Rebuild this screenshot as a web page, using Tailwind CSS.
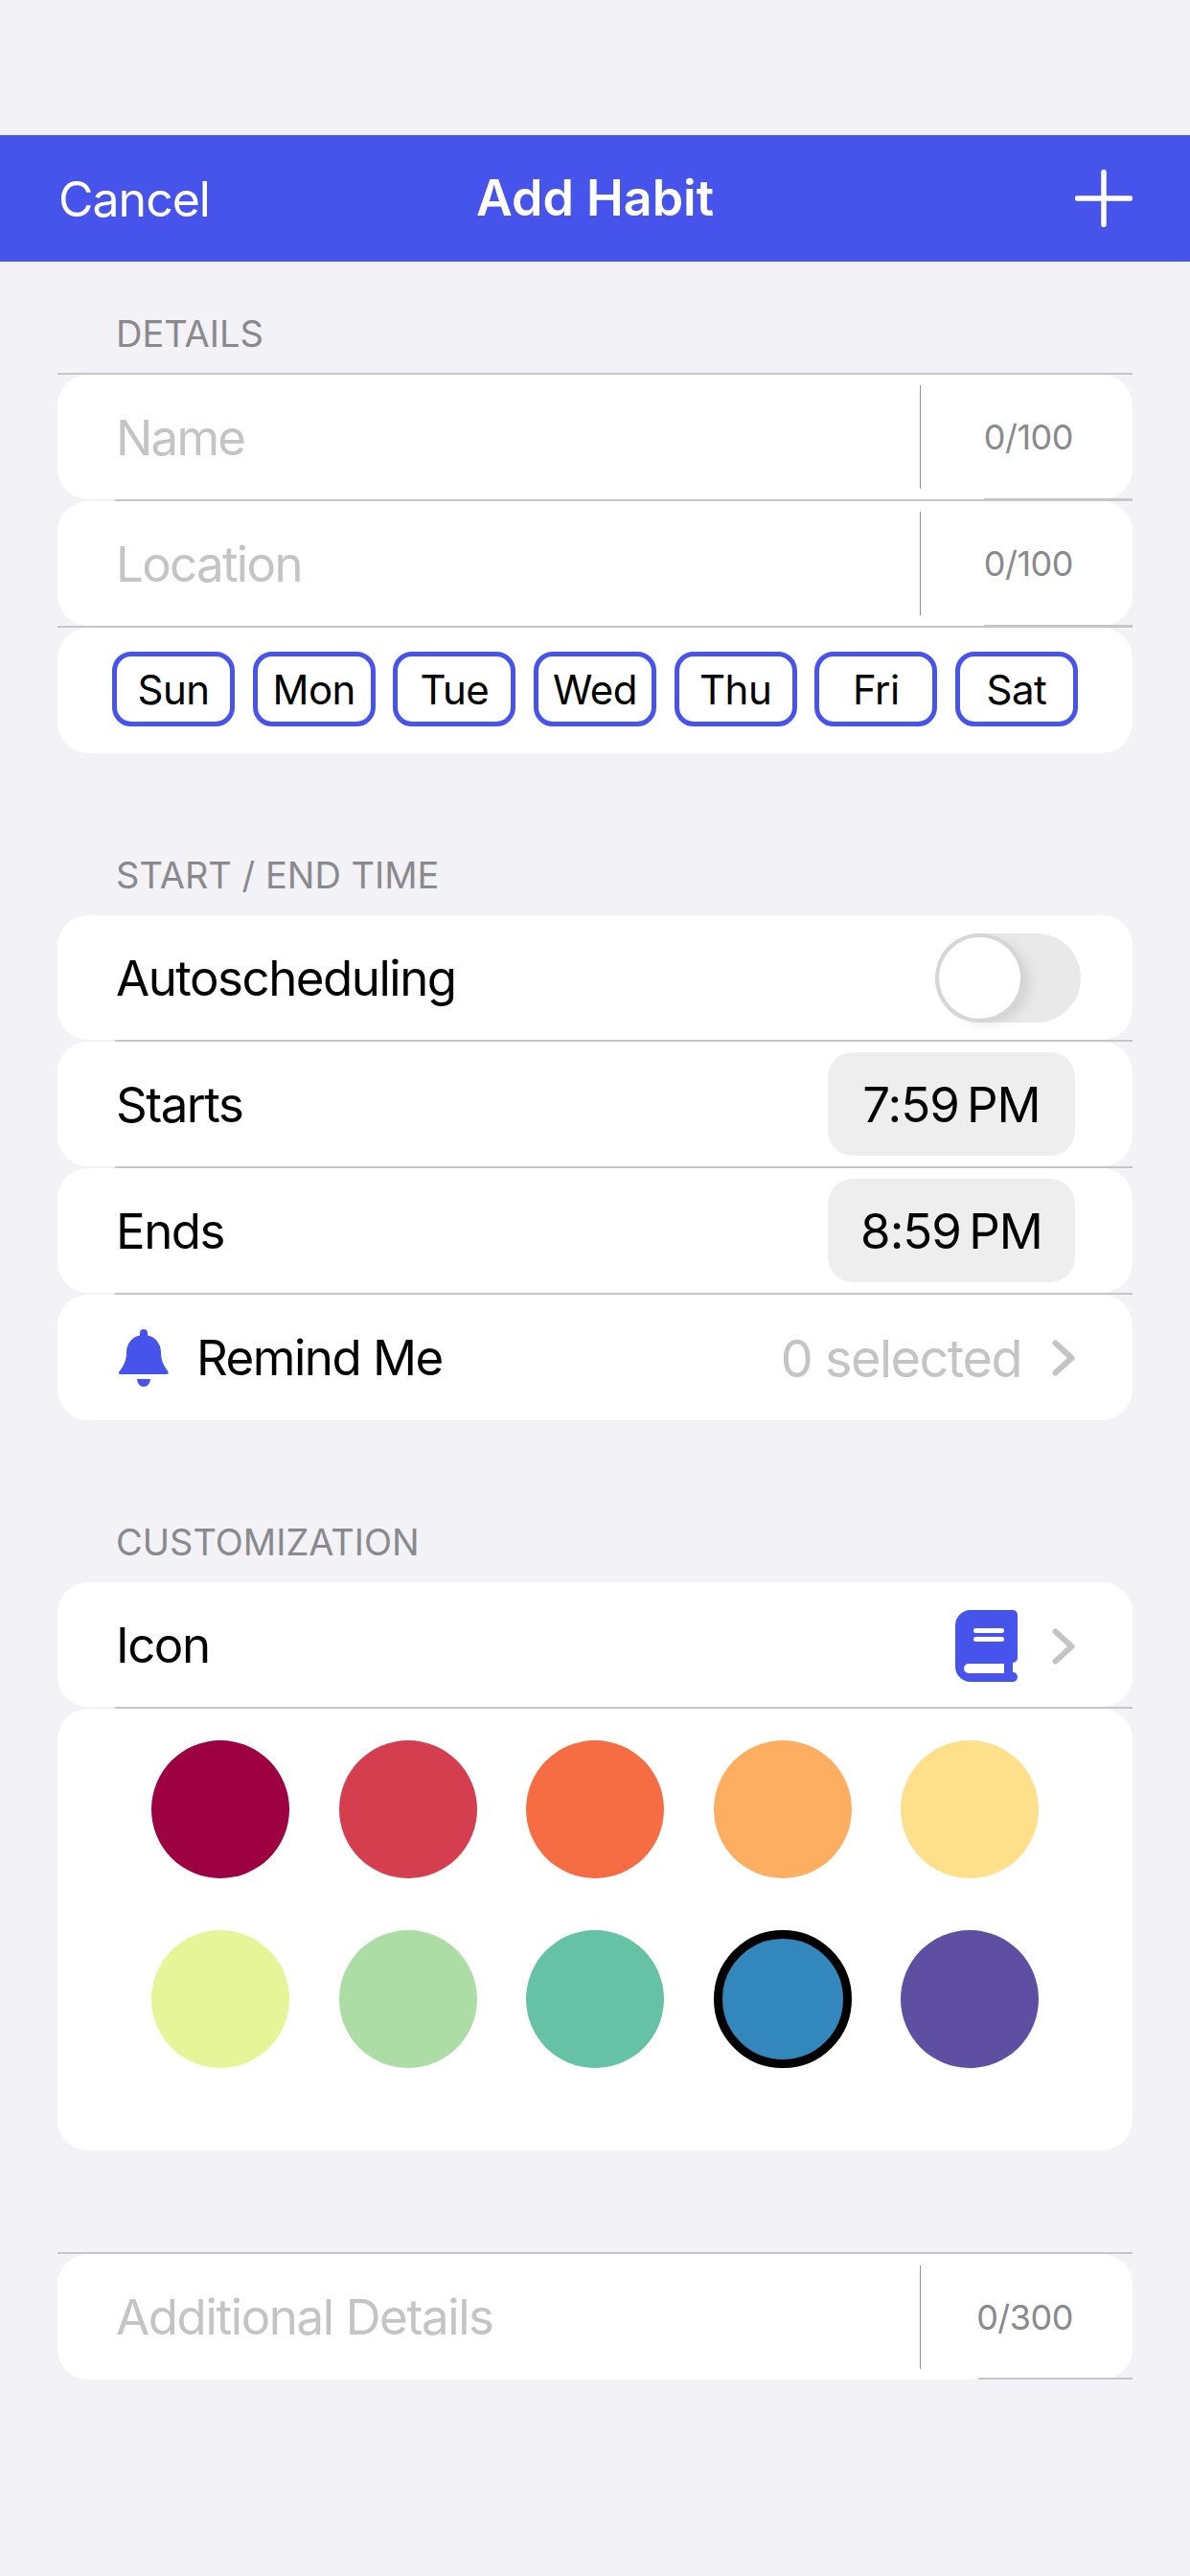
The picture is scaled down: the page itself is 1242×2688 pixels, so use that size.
<!DOCTYPE html>
<html lang="en">
<head>
  <meta charset="UTF-8" />
  <meta name="viewport" content="width=device-width, initial-scale=1.0">
  <title>Add Habit</title>
  <script src="https://cdn.jsdelivr.net/npm/@tailwindcss/browser@4"></script>
</head>
<body class="bg-[#f2f2f7] font-['Inter',sans-serif] text-black w-[1242px] h-[2688px] overflow-hidden">

  <!-- Nav bar -->
  <header class="mt-[141px] h-[132px] bg-[#4654eb] text-white flex items-center justify-between pl-[61px] pr-[60px] relative">
    <span class="mt-[2px] text-[50px] tracking-[-1px]">Cancel</span>
    <h1 class="absolute left-0 right-0 text-center text-[52px] font-semibold">Add Habit</h1>
    <svg width="60" height="60" viewBox="0 0 60 60"><path d="M30 2.5V57.5M2.500 30H57.500" stroke="#fff" stroke-width="5.500" stroke-linecap="round"/></svg>
  </header>

  <main class="mx-[60px]">
    <!-- Details -->
    <h2 class="h-[116px] pl-[61px] pt-[52px] text-[38px] leading-[46px] text-[#8a8a8e]">DETAILS</h2>
    <div class="h-[2px] bg-[#c6c6c8]"></div>
    <div class="h-[130px] bg-white rounded-[32px] flex items-center pl-[61px]">
      <span class="mt-[2px] flex-1 text-[51px] tracking-[-1.8px] text-[#c4c4c6]">Name</span>
      <div class="w-px h-[108px] bg-[#8e8e90]"></div>
      <span class="w-[221px] pr-[62px] text-right text-[36px] tracking-[-0.5px] text-[#8a8a8e]">0/100</span>
    </div>
    <div class="h-[2px] ml-[60px] flex items-end bg-[#c6c6c8]"><div class="ml-auto w-[155px] h-[3px] bg-[#c6c6c8]"></div></div>
    <div class="h-[130px] bg-white rounded-[32px] flex items-center pl-[61px]">
      <span class="mt-[2px] flex-1 text-[51px] tracking-[-1.7px] text-[#c4c4c6]">Location</span>
      <div class="w-px h-[108px] bg-[#8e8e90]"></div>
      <span class="w-[221px] pr-[62px] text-right text-[36px] tracking-[-0.5px] text-[#8a8a8e]">0/100</span>
    </div>
    <div class="h-[2px] flex items-end bg-[#c6c6c8]"><div class="ml-auto w-[155px] h-[3px] bg-[#c6c6c8]"></div></div>
    <div class="h-[131px] bg-white rounded-[32px] flex items-center justify-between pb-[3px] pl-[57px] pr-[57px]">
      <button class="w-[128px] h-[78px] rounded-[20px] border-[5px] border-[#4654eb] text-[42px] tracking-[-0.5px]">Sun</button>
      <button class="w-[128px] h-[78px] rounded-[20px] border-[5px] border-[#4654eb] text-[42px] tracking-[-0.5px]">Mon</button>
      <button class="w-[128px] h-[78px] rounded-[20px] border-[5px] border-[#4654eb] text-[42px] tracking-[-0.5px]">Tue</button>
      <button class="w-[128px] h-[78px] rounded-[20px] border-[5px] border-[#4654eb] text-[42px] tracking-[-0.5px]">Wed</button>
      <button class="w-[128px] h-[78px] rounded-[20px] border-[5px] border-[#4654eb] text-[42px] tracking-[-0.5px]">Thu</button>
      <button class="w-[128px] h-[78px] rounded-[20px] border-[5px] border-[#4654eb] text-[42px] tracking-[-0.5px]">Fri</button>
      <button class="w-[128px] h-[78px] rounded-[20px] border-[5px] border-[#4654eb] text-[42px] tracking-[-0.5px]">Sat</button>
    </div>

    <!-- Start / end time -->
    <h2 class="h-[169px] pl-[61px] pt-[104px] text-[38px] leading-[46px] text-[#8a8a8e]">START / END TIME</h2>
    <div class="h-[130px] bg-white rounded-[32px] flex items-center justify-between pl-[61px] pr-[54px]">
      <span class="mt-[2px] text-[51px] tracking-[-1.5px]">Autoscheduling</span>
      <div class="w-[152px] h-[93px] rounded-full bg-[#e9e9ea] p-[4px]">
        <div class="w-[85px] h-[85px] rounded-full bg-white shadow-[0_0_0_4px_#d6d6d8,8px_4px_14px_rgba(0,0,0,0.12)]"></div>
      </div>
    </div>
    <div class="h-[2px] ml-[60px] bg-[#c6c6c8]"></div>
    <div class="h-[130px] bg-white rounded-[32px] flex items-center justify-between pl-[61px] pr-[60px]">
      <span class="mt-[2px] text-[51px] tracking-[-1.5px]">Starts</span>
      <span class="w-[258px] h-[108px] rounded-[26px] bg-[#eeeeef] flex items-center justify-center pt-[2px] text-[51px] tracking-[-1px]">7:59&#8201;PM</span>
    </div>
    <div class="h-[2px] ml-[60px] bg-[#c6c6c8]"></div>
    <div class="h-[130px] bg-white rounded-[32px] flex items-center justify-between pl-[61px] pr-[60px]">
      <span class="mt-[2px] text-[51px] tracking-[-1.5px]">Ends</span>
      <span class="w-[258px] h-[108px] rounded-[26px] bg-[#eeeeef] flex items-center justify-center pt-[2px] text-[51px] tracking-[-1px]">8:59&#8201;PM</span>
    </div>
    <div class="h-[2px] ml-[60px] bg-[#c6c6c8]"></div>
    <div class="h-[131px] bg-white rounded-[32px] flex items-center pl-[64px] pr-[60px]">
      <svg width="52" height="60" viewBox="0 0 52 60" fill="#4654eb"><path d="M26 0a4 4 0 0 1 4 4v2.500C38 8 44 15 44 24c0 9 3 14 7 19.500 1.500 2 .5 3.500-1.500 3.500H2C0 47-1 45.500 1 43.500 5 38 8 33 8 24 8 15 14 8 22 6.500V4a4 4 0 0 1 4-4Z"/><path d="M19 52h14a7 8 0 0 1-14 0Z"/></svg>
      <span class="ml-[29px] mt-[2px] flex-1 text-[51px] tracking-[-1.5px]">Remind Me</span>
      <span class="mt-[2px] text-[54px] tracking-[-1.5px] text-[#c4c4c6]">0 selected</span>
      <svg class="ml-[32px]" width="24" height="38" viewBox="0 0 24 38"><path d="M3.500 3.500 20.500 19 3.500 34.500" fill="none" stroke="#c4c4c6" stroke-width="6" stroke-linecap="round" stroke-linejoin="round"/></svg>
    </div>

    <!-- Customization -->
    <h2 class="h-[169px] pl-[61px] pt-[104px] text-[38px] leading-[46px] text-[#8a8a8e]">CUSTOMIZATION</h2>
    <div class="h-[130px] bg-white rounded-[32px] flex items-center justify-between pl-[61px] pr-[60px]">
      <span class="mt-[2px] text-[51px] tracking-[-1.5px]">Icon</span>
      <div class="mt-[3px] flex items-center gap-[36px]">
        <svg width="65" height="75" viewBox="0 0 65 75"><path fill="#4654eb" d="M16 0H60a5 5 0 0 1 5 5V50a5 5 0 0 1-5 5V65h.5a4.500 5 0 0 1 0 10H16A16 16 0 0 1 0 59V16A16 16 0 0 1 16 0Z"/><path fill="#fff" d="M21.500 19h27a2.500 2.500 0 0 1 0 5h-27a2.500 2.500 0 0 1 0-5ZM21.500 28h27a2.500 2.500 0 0 1 0 5h-27a2.500 2.500 0 0 1 0-5ZM14 56h37v10H14a5 5 0 0 1 0-10Z"/></svg>
        <svg width="24" height="38" viewBox="0 0 24 38"><path d="M3.500 3.500 20.500 19 3.500 34.500" fill="none" stroke="#c4c4c6" stroke-width="6" stroke-linecap="round" stroke-linejoin="round"/></svg>
      </div>
    </div>
    <div class="h-[2px] ml-[60px] bg-[#c6c6c8]"></div>
    <div class="h-[461px] bg-white rounded-[32px] px-[98px] pt-[33px] grid grid-cols-5 grid-rows-[144px_144px] gap-x-[51.500px] gap-y-[54px]">
      <div class="w-[144px] h-[144px] rounded-full bg-[#9e0142]"></div>
      <div class="w-[144px] h-[144px] rounded-full bg-[#d53e4f]"></div>
      <div class="w-[144px] h-[144px] rounded-full bg-[#f76d43]"></div>
      <div class="w-[144px] h-[144px] rounded-full bg-[#fdae61]"></div>
      <div class="w-[144px] h-[144px] rounded-full bg-[#fee08b]"></div>
      <div class="w-[144px] h-[144px] rounded-full bg-[#e6f598]"></div>
      <div class="w-[144px] h-[144px] rounded-full bg-[#abdda4]"></div>
      <div class="w-[144px] h-[144px] rounded-full bg-[#66c2a5]"></div>
      <div class="w-[144px] h-[144px] rounded-full bg-[#3288bd] border-[9px] border-black"></div>
      <div class="w-[144px] h-[144px] rounded-full bg-[#5e4fa2]"></div>
    </div>

    <!-- Additional details -->
    <div class="h-[2px] mt-[106px] bg-[#c6c6c8]"></div>
    <div class="h-[131px] bg-white rounded-[32px] flex items-center pl-[61px]">
      <span class="mt-[2px] flex-1 text-[51px] tracking-[-1.4px] text-[#c4c4c6]">Additional Details</span>
      <div class="w-px h-[108px] bg-[#8e8e90]"></div>
      <span class="w-[221px] pr-[62px] text-right text-[36px] tracking-[-0.5px] text-[#8a8a8e]">0/300</span>
    </div>
    <div class="h-[2px] -mt-[2px] ml-auto w-[161px] bg-[#c6c6c8]"></div>
  </main>
</body>
</html>
